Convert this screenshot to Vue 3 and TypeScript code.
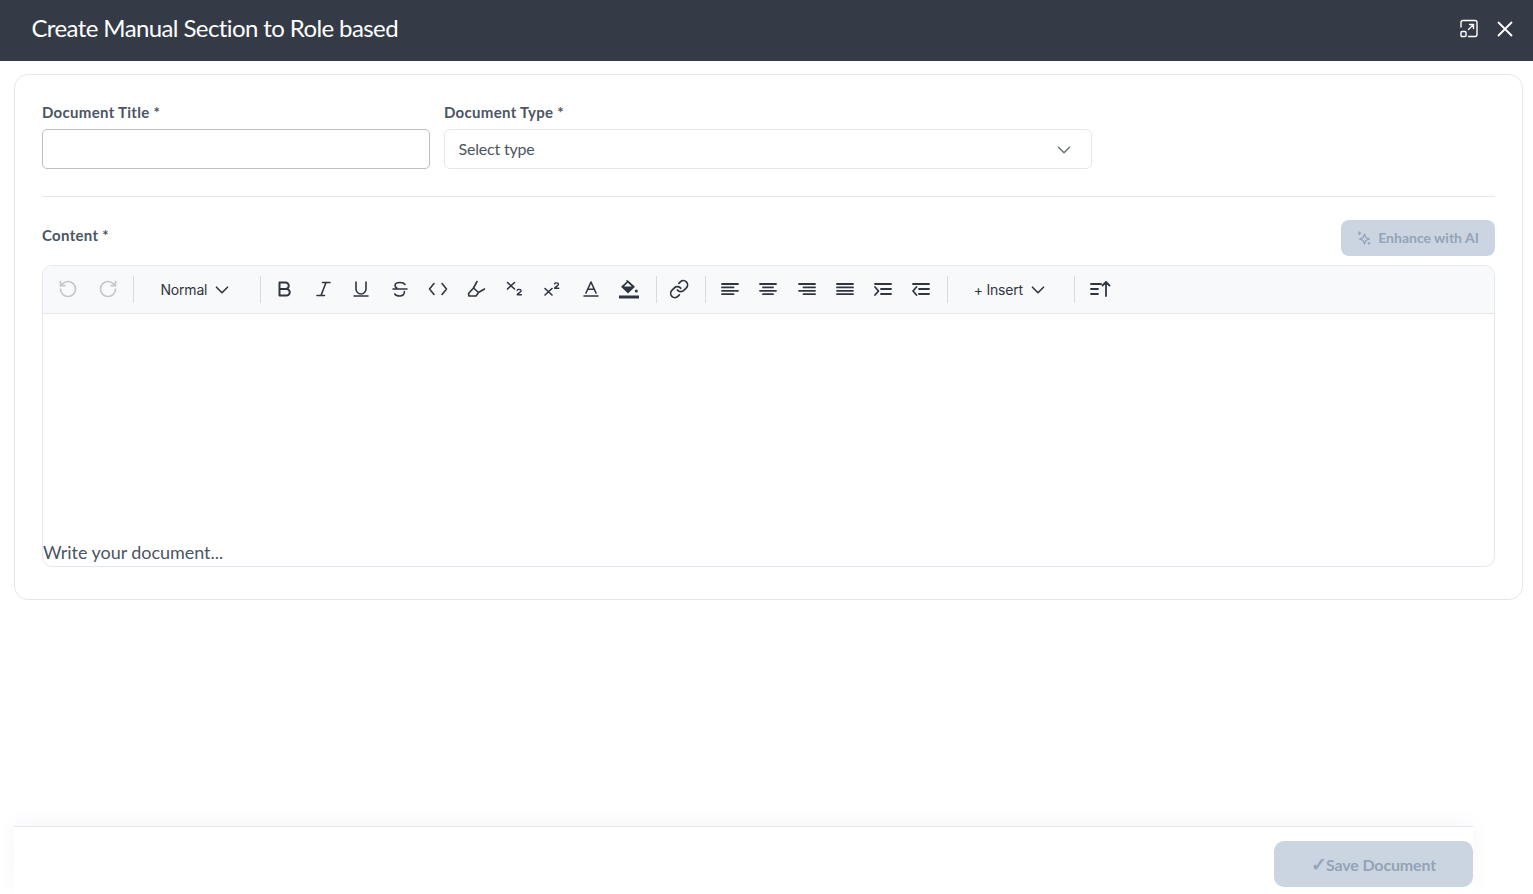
<script setup lang="ts">
import { ref } from 'vue'

interface ToolIcon {
  name: string
  svg: string
}

const title = ref('')

const line = (x1: number, x2: number, y: number) => `<path d="M${x1} ${y}H${x2}"/>`

const textTools: ToolIcon[] = [
  { name: 'bold', svg: '<path stroke-width="2" d="M4.500 3.500v13M4.500 3.500h6a3.200 3.200 0 0 1 0 6.500h-6M4.500 10h7a3.200 3.200 0 0 1 0 6.500h-7"/>' },
  { name: 'italic', svg: '<path d="M9.500 3.500h7.500M4 16.500h7.500M13 3.500 8 16.500"/>' },
  { name: 'underline', svg: '<path d="M5 3v7a5 5 0 0 0 10 0V3M3 17h14"/>' },
  { name: 'strike', svg: '<path d="M3 10h14M15 5.500C14 4 12.500 3.500 10 3.500 7 3.500 5 4.700 5 6.500c0 1.200.7 2 1.800 2.500M14.300 12.500c.8 2.500-1.500 4.500-4.500 4.500-2.500 0-4.300-.8-5-2"/>' },
  { name: 'code', svg: '<path d="M6 4.500 1.500 10 6 15.500M14 4.500 18.500 10 14 15.500"/>' },
  { name: 'highlight', svg: '<path d="M3 17h7l2.500-3.500-5-4.500-5 5.500zM7.500 9l3.500-6.500M12.500 13.500l6-3.500"/>' },
  { name: 'subscript', svg: '<path d="M3.500 3.500l7 6.500M10.500 3.500l-7 6.500"/><path stroke-width="1.400" d="M13.200 11.300c.3-1.300 3.900-1.300 3.900.5 0 1.500-2.900 2.300-3.900 3.900h4.200"/>' },
  { name: 'superscript', svg: '<path d="M3 9.500l7 6.500M10 9.500l-7 6.500"/><path stroke-width="1.400" d="M12.600 4.800c.3-1.300 3.900-1.300 3.900.5 0 1.500-2.900 2.300-3.900 3.900h4.200"/>' },
  { name: 'text-color', svg: '<path d="M5 14 10 3l5 11M6.800 10.200h6.400M3 17h14"/>' },
  { name: 'fill-color', svg: '<path fill="currentColor" stroke="none" d="M8.800 1.200 16 7.800l-7 6.600-7-6.600 5.800-5.300-1-1zM8.800 3.800 5 7.400h7.800z"/><circle cx="17.300" cy="12" r="1.500" fill="currentColor" stroke="none"/><rect x="0" y="16.500" width="20" height="3" fill="currentColor" stroke="none"/>' },
]

const linkTool: ToolIcon = {
  name: 'link',
  svg: '<g transform="scale(.85) translate(-.1 -.1)" stroke-width="2"><path d="M10 13a5 5 0 0 0 7.540.54l3-3a5 5 0 0 0-7.070-7.070l-1.720 1.710"/><path d="M14 11a5 5 0 0 0-7.540-.54l-3 3a5 5 0 0 0 7.070 7.070l1.710-1.710"/></g>',
}

const ys = [5, 8.4, 11.8, 15.2]

const alignTools: ToolIcon[] = [
  { name: 'left', svg: line(2, 18, ys[0]) + line(2, 13.5, ys[1]) + line(2, 18, ys[2]) + line(2, 13.5, ys[3]) },
  { name: 'center', svg: line(2, 18, ys[0]) + line(5, 15, ys[1]) + line(2, 18, ys[2]) + line(5, 15, ys[3]) },
  { name: 'right', svg: line(2, 18, ys[0]) + line(6.5, 18, ys[1]) + line(2, 18, ys[2]) + line(6.5, 18, ys[3]) },
  { name: 'justify', svg: line(2, 18, ys[0]) + line(2, 18, ys[1]) + line(2, 18, ys[2]) + line(2, 18, ys[3]) },
  { name: 'indent', svg: line(2, 18, 5) + line(8, 18, 10) + line(8, 18, 15) + '<path d="M2 8l3.500 4L2 16"/>' },
  { name: 'outdent', svg: line(2, 18, 5) + line(8, 18, 10) + line(8, 18, 15) + '<path d="M5.500 8 2 12l3.500 4"/>' },
]
</script>

<template>
  <div class="page">
    <header class="topbar">
      <h1 class="topbar-title">Create Manual Section to Role based</h1>
      <div class="topbar-actions">
        <svg class="expand-icon" viewBox="0 0 20 20" fill="none" stroke="currentColor" stroke-width="1.400" stroke-linecap="round">
          <path d="M2 8V3.500A2 2 0 0 1 4 1.500h12a2 2 0 0 1 2 2v12a2 2 0 0 1-2 2H9.500" />
          <rect x="2" y="12.500" width="5" height="5" rx="1" />
          <path d="M9.500 10.500 14 6M10.500 5.500H14.500V9.500" />
        </svg>
        <svg class="close-icon" viewBox="0 0 16 16" fill="none" stroke="currentColor" stroke-width="1.800" stroke-linecap="round">
          <path d="M1.500 1.500l13 13M14.500 1.500l-13 13" />
        </svg>
      </div>
    </header>

    <main class="content">
      <section class="card">
        <div class="form-row">
          <div class="field">
            <label class="field-label">Document Title *</label>
            <input v-model="title" class="title-input" type="text" />
          </div>
          <div class="field">
            <label class="field-label">Document Type *</label>
            <div class="select-box">
              <span class="select-text">Select type</span>
              <svg class="select-chevron" viewBox="0 0 14 8" fill="none" stroke="currentColor" stroke-width="1.500" stroke-linecap="round" stroke-linejoin="round">
                <path d="M1.500 1.200 7 6.700l5.500-5.500" />
              </svg>
            </div>
          </div>
        </div>

        <div class="divider"></div>

        <div class="content-head">
          <label class="field-label content-label">Content *</label>
          <button class="enhance-btn" type="button" disabled>
            <svg class="spark-icon" viewBox="0 0 14 14" fill="none" stroke="currentColor" stroke-width="1.300" stroke-linejoin="round">
              <path d="M7.500 3l1.400 3.600L12.500 8 8.900 9.400 7.500 13 6.100 9.400 2.500 8l3.600-1.400z" />
              <path d="M2.500.5v3.400M.8 2.200h3.400M12 11v2.600M10.700 12.300h2.600" />
            </svg>
            <span>Enhance with AI</span>
          </button>
        </div>

        <div class="editor">
          <div class="toolbar">
            <button class="tool muted undo" type="button">
              <svg viewBox="0 0 24 24" class="tool-svg" fill="none" stroke="currentColor" stroke-width="2" stroke-linecap="round" stroke-linejoin="round">
                <path d="M3 12a9 9 0 1 0 9-9 9.750 9.750 0 0 0-6.740 2.740L3 8" /><path d="M3 3v5h5" />
              </svg>
            </button>
            <button class="tool muted redo" type="button">
              <svg viewBox="0 0 24 24" class="tool-svg" fill="none" stroke="currentColor" stroke-width="2" stroke-linecap="round" stroke-linejoin="round">
                <path d="M21 12a9 9 0 1 1-9-9c2.520 0 4.930 1 6.740 2.740L21 8" /><path d="M21 3v5h-5" />
              </svg>
            </button>
            <span class="sep"></span>
            <button class="dropdown normal-drop" type="button">
              <span>Normal</span>
              <svg class="drop-chevron" viewBox="0 0 14 8" fill="none" stroke="currentColor" stroke-width="1.600" stroke-linecap="round" stroke-linejoin="round">
                <path d="M1.500 1.200 7 6.700l5.500-5.500" />
              </svg>
            </button>
            <span class="sep sep-tight"></span>
            <button v-for="t in textTools" :key="t.name" class="tool" type="button">
              <svg viewBox="0 0 20 20" class="tool-svg" fill="none" stroke="currentColor" stroke-width="1.600" stroke-linecap="round" stroke-linejoin="round" v-html="t.svg"></svg>
            </button>
            <span class="sep sep-text"></span>
            <button class="tool" type="button">
              <svg viewBox="0 0 20 20" class="tool-svg" fill="none" stroke="currentColor" stroke-linecap="round" stroke-linejoin="round" v-html="linkTool.svg"></svg>
            </button>
            <span class="sep sep-group"></span>
            <button v-for="t in alignTools" :key="t.name" class="tool" type="button">
              <svg viewBox="0 0 20 20" class="tool-svg" fill="none" stroke="currentColor" stroke-width="1.800" stroke-linecap="round" stroke-linejoin="round" v-html="t.svg"></svg>
            </button>
            <span class="sep sep-group"></span>
            <button class="dropdown insert-drop" type="button">
              <span>+ Insert</span>
              <svg class="drop-chevron" viewBox="0 0 14 8" fill="none" stroke="currentColor" stroke-width="1.600" stroke-linecap="round" stroke-linejoin="round">
                <path d="M1.500 1.200 7 6.700l5.500-5.500" />
              </svg>
            </button>
            <span class="sep"></span>
            <button class="tool" type="button">
              <svg viewBox="0 0 20 20" class="tool-svg" fill="none" stroke="currentColor" stroke-width="1.800" stroke-linecap="round" stroke-linejoin="round">
                <path d="M1 5h10M1 10h7M1 15h7M16 17V3M12.500 6.500 16 3l3.500 3.500" />
              </svg>
            </button>
          </div>
          <div class="editor-body">
            <p class="placeholder">Write your document...</p>
          </div>
        </div>
      </section>
    </main>

    <footer class="footer">
      <button class="save-btn" type="button" disabled>
        <span class="save-check">✓</span>
        <span>Save Document</span>
      </button>
    </footer>
  </div>
</template>

<style scoped>
.page {
  height: 894px;
  display: flex;
  flex-direction: column;
  overflow: hidden;
  background: #fff;
  font-family: Lato, "Liberation Sans", sans-serif;
}

.topbar {
  height: 61px;
  flex-shrink: 0;
  display: flex;
  align-items: center;
  justify-content: space-between;
  padding: 0 20px 3px 31.500px;
  box-sizing: border-box;
  background: #343b46;
  color: #fff;
}

.topbar-title {
  margin: 0 0 4px;
  font-size: 24px;
  font-weight: 400;
  letter-spacing: -0.6px;
}

.topbar-actions {
  display: flex;
  align-items: center;
  gap: 18px;
}

.expand-icon {
  width: 20px;
  height: 20px;
}

.close-icon {
  width: 16px;
  height: 16px;
}

.content {
  flex: 1;
  padding: 13px 10px 0 14px;
}

.card {
  height: 526px;
  box-sizing: border-box;
  padding: 28px 27px 32px;
  border: 1px solid #e2e8f0;
  border-radius: 14px;
  background: #fff;
}

.form-row {
  display: grid;
  grid-template-columns: 388px 648px;
  gap: 14px;
}

.field-label {
  display: block;
  font-size: 15px;
  font-weight: 700;
  line-height: 18px;
  letter-spacing: 0.3px;
  color: #4b5563;
}

.field .field-label {
  margin-bottom: 8px;
}

.title-input {
  display: block;
  width: 100%;
  height: 40px;
  box-sizing: border-box;
  border: 1px solid #bdbdbd;
  border-radius: 5px;
  outline: none;
  background: #fff;
}

.select-box {
  height: 40px;
  box-sizing: border-box;
  display: flex;
  align-items: center;
  justify-content: space-between;
  padding: 0 20px 0 13.500px;
  border: 1px solid #e5e7eb;
  border-radius: 6px;
  font-size: 16px;
  color: #4b5563;
}

.select-text {
  margin-bottom: 2px;
  letter-spacing: -0.2px;
}

.select-chevron {
  width: 14px;
  height: 8px;
  margin-top: 2px;
  color: #6b7280;
}

.divider {
  height: 1px;
  margin-top: 27px;
  background: #e5e7eb;
}

.content-head {
  display: flex;
  align-items: flex-start;
  justify-content: space-between;
  margin-top: 23px;
  height: 45px;
}

.content-label {
  margin-top: 6px;
}

.enhance-btn {
  width: 154px;
  height: 36px;
  display: flex;
  align-items: center;
  justify-content: center;
  gap: 7px;
  padding: 0 0 2px;
  border: none;
  border-radius: 8px;
  background: #cbd5e1;
  color: #94a3b8;
  font-family: inherit;
  font-size: 14px;
  font-weight: 700;
}

.spark-icon {
  width: 14px;
  height: 14px;
  margin-top: 2px;
}

.editor {
  height: 302px;
  display: flex;
  flex-direction: column;
  box-sizing: border-box;
  border: 1px solid #e2e8f0;
  border-radius: 10px;
  overflow: hidden;
}

.toolbar {
  height: 47px;
  flex-shrink: 0;
  display: flex;
  align-items: center;
  padding-left: 5px;
  background: #f8f9fb;
  border-bottom: 1px solid #e5e7eb;
}

.tool {
  width: 38.200px;
  height: 36px;
  flex-shrink: 0;
  display: flex;
  align-items: center;
  justify-content: center;
  padding: 0;
  border: none;
  background: transparent;
  color: #2f3640;
}

.tool.muted {
  color: #c3c7cc;
}

.undo {
  width: 39px;
  margin-right: 1px;
}

.redo {
  width: 39px;
}

.tool-svg {
  width: 20px;
  height: 20px;
  margin-bottom: 1px;
  overflow: visible;
}

.sep {
  width: 1px;
  height: 27px;
  flex-shrink: 0;
  margin: 0 6px;
  background: #d8dbe0;
}

.sep-tight {
  margin: 0 5px 0 6px;
}

.sep-text {
  margin: 0 3px 0 8px;
}

.sep-group {
  margin: 0 5px 0 7px;
}

.dropdown {
  height: 36px;
  flex-shrink: 0;
  display: flex;
  align-items: center;
  padding: 0;
  border: none;
  background: transparent;
  color: #2f3640;
  font-family: Inter, "Liberation Sans", sans-serif;
  font-size: 14px;
  letter-spacing: -0.2px;
}

.normal-drop {
  width: 114px;
  padding-left: 20.500px;
  box-sizing: border-box;
  justify-content: flex-start;
  gap: 8px;
}

.insert-drop {
  width: 115px;
  padding-left: 20.500px;
  box-sizing: border-box;
  justify-content: flex-start;
  gap: 8px;
}

.drop-chevron {
  width: 14px;
  height: 8px;
}

.editor-body {
  flex: 1;
  display: flex;
  align-items: flex-end;
  padding-bottom: 1px;
}

.placeholder {
  margin: 0;
  font-size: 18px;
  line-height: 26px;
  letter-spacing: -0.05px;
  color: #4b5563;
}

.footer {
  height: 68px;
  flex-shrink: 0;
  width: 1459px;
  margin-left: 14px;
  box-sizing: border-box;
  display: flex;
  justify-content: flex-end;
  padding-top: 14px;
  border-top: 1px solid #e2e8f0;
  background: #fff;
  box-shadow: 0 -4px 20px rgba(0, 0, 0, 0.04);
}

.save-btn {
  width: 199px;
  height: 46px;
  display: flex;
  align-items: center;
  justify-content: center;
  padding: 0;
  border: none;
  border-radius: 10px;
  background: #cbd5e1;
  color: #94a3b8;
  font-family: inherit;
  font-size: 16px;
  font-weight: 700;
  letter-spacing: -0.15px;
}

.save-check {
  width: 15px;
  font-family: "DejaVu Sans", sans-serif;
  font-size: 19px;
  font-weight: 700;
  line-height: 20px;
  -webkit-text-stroke: 0.6px #94a3b8;
}
</style>

<style>
html,
body {
  margin: 0;
  background: #fff;
}
</style>
